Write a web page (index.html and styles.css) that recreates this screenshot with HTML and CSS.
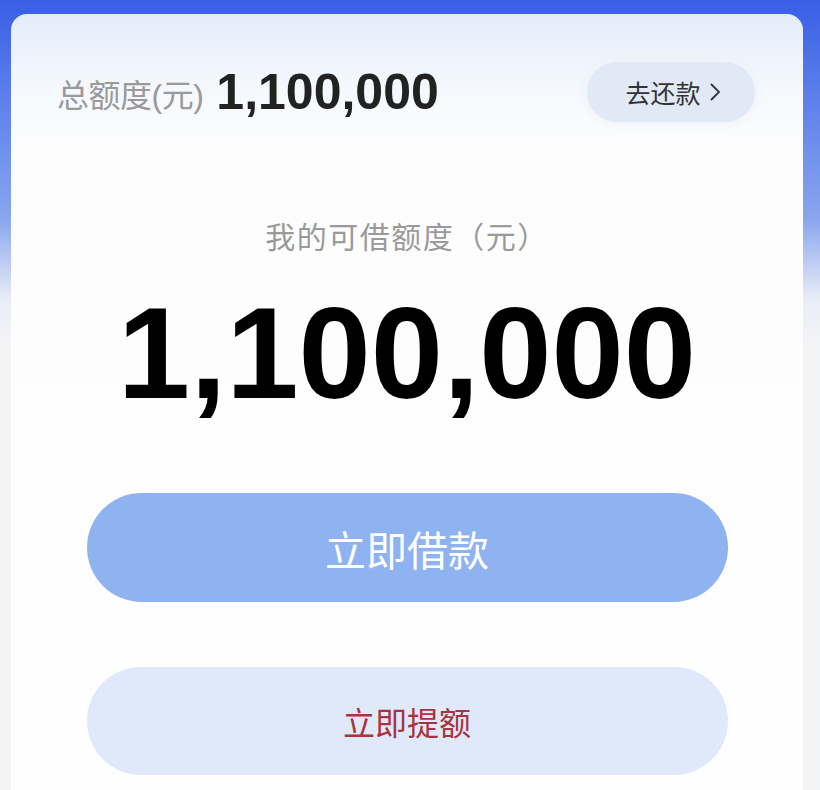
FILE: index.html
```html
<!DOCTYPE html>
<html lang="zh-CN">
<head>
  <meta charset="UTF-8" />
  <meta name="viewport" content="width=device-width, initial-scale=1.0"/>
  <title>我的额度</title>
  <link rel="stylesheet" href="styles.css">
</head>
<body>
  <div class="card">
    <div class="top-row">
      <div class="total">
        <span class="total-label">总额度(元)</span>
        <span class="total-value">1,100,000</span>
      </div>
      <button class="repay">
        去还款
        <svg class="chev" width="12" height="20" viewBox="0 0 12 20"><path d="M2 2l8 8-8 8" fill="none" stroke="#333" stroke-width="1.8"/></svg>
      </button>
    </div>

    <div class="avail-label">我的可借额度（元）</div>
    <div class="avail-value">1,100,000</div>

    <button class="btn-borrow">立即借款</button>
    <button class="btn-raise">立即提额</button>
  </div>
</body>
</html>
```

FILE: styles.css
```css
body {
  margin: 0;
  font-family: 'Liberation Sans', 'Noto Sans CJK SC', sans-serif;
  background: linear-gradient(180deg, #3a5ee6 0, #5a7deb 90px, #8aa6ee 220px, #e9edf6 300px, #f3f4f6 340px, #f3f4f6 100%);
  min-height: 790px;
  overflow: hidden;
}

.card {
  margin: 14px 17px 0 11px;
  height: 800px;
  border-radius: 16px 16px 0 0;
  background: linear-gradient(180deg, #e3edf9 0, #f4f8fd 70px, #fdfdfe 140px, #fefefe 100%);
  display: flex;
  flex-direction: column;
  align-items: center;
}

.top-row {
  align-self: stretch;
  display: flex;
  justify-content: space-between;
  align-items: center;
  padding: 48px 48px 0 46px;
}

.total {
  display: flex;
  align-items: center;
  gap: 13px;
}

.total-label {
  font-size: 32px;
  color: #9a9a9a;
  letter-spacing: -0.5px;
  margin-top: 2px;
}

.total-value {
  font-size: 50px;
  font-weight: bold;
  color: #222;
}

.repay {
  height: 60px;
  width: 168px;
  border: none;
  border-radius: 30px;
  background: #e2e9f6;
  box-shadow: 0 0 8px 2px #eef2f9;
  font-family: inherit;
  font-size: 25px;
  color: #333;
  padding: 0 0 0 4px;
  display: flex;
  align-items: center;
  justify-content: center;
  gap: 8px;
}

.avail-label {
  margin-top: 96px;
  font-size: 30px;
  line-height: 40px;
  color: #9a9a9a;
  letter-spacing: 1.5px;
}

.avail-value {
  margin-top: 30px;
  font-size: 130px;
  line-height: 130px;
  font-weight: bold;
  color: #000;
}

.btn-borrow,
.btn-raise {
  width: 641px;
  border: none;
  border-radius: 55px;
  font-family: inherit;
  cursor: pointer;
}

.btn-borrow {
  margin-top: 75px;
  height: 109px;
  background: #8eb3f0;
  color: #fff;
  font-size: 41px;
}

.btn-raise {
  margin-top: 65px;
  height: 108px;
  background: #e0e9f9;
  color: #a8343f;
  font-size: 32px;
}
```
